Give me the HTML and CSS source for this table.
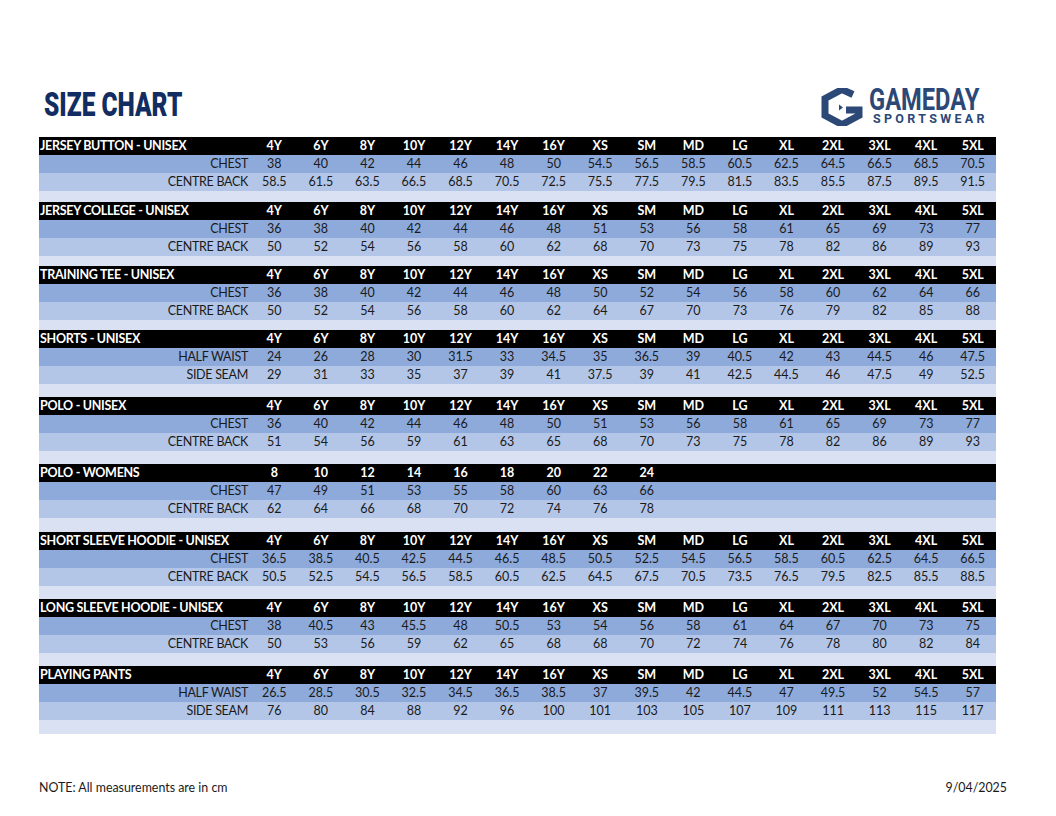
FILE: index.html
```html
<!DOCTYPE html>
<html>
<head>
<meta charset="utf-8">
<link rel="stylesheet" href="styles.css">
</head>
<body>
<div class="page">
  <header class="top">
    <h1 class="title"><span>SIZE CHART</span></h1>
    <div class="logo">
      <svg class="logo-mark" viewBox="0 0 42 38" width="42" height="38">
        <path d="M32,6.5 L21,1.5 L4,10.5 L4,27.5 L21,36.5 L38,27.5 L38,22 L25,22" fill="none" stroke="#2b4877" stroke-width="7" stroke-linejoin="miter"/>
        <polygon points="18,16.5 22,19.5 18,22.5" fill="#2b4877"/>
      </svg>
      <div class="logo-text">
        <div class="logo-name"><span>GAMEDAY</span></div>
        <div class="logo-sub">SPORTSWEAR</div>
      </div>
    </div>
  </header>

  <div class="chart">
    <section class="group">
      <div class="row head"><span class="label">JERSEY BUTTON - UNISEX</span><span>4Y</span><span>6Y</span><span>8Y</span><span>10Y</span><span>12Y</span><span>14Y</span><span>16Y</span><span>XS</span><span>SM</span><span>MD</span><span>LG</span><span>XL</span><span>2XL</span><span>3XL</span><span>4XL</span><span>5XL</span></div>
      <div class="row r1"><span class="label">CHEST</span><span>38</span><span>40</span><span>42</span><span>44</span><span>46</span><span>48</span><span>50</span><span>54.5</span><span>56.5</span><span>58.5</span><span>60.5</span><span>62.5</span><span>64.5</span><span>66.5</span><span>68.5</span><span>70.5</span></div>
      <div class="row r2"><span class="label">CENTRE BACK</span><span>58.5</span><span>61.5</span><span>63.5</span><span>66.5</span><span>68.5</span><span>70.5</span><span>72.5</span><span>75.5</span><span>77.5</span><span>79.5</span><span>81.5</span><span>83.5</span><span>85.5</span><span>87.5</span><span>89.5</span><span>91.5</span></div>
      <div class="spacer sp-a"></div>
    </section>

    <section class="group">
      <div class="row head"><span class="label">JERSEY COLLEGE - UNISEX</span><span>4Y</span><span>6Y</span><span>8Y</span><span>10Y</span><span>12Y</span><span>14Y</span><span>16Y</span><span>XS</span><span>SM</span><span>MD</span><span>LG</span><span>XL</span><span>2XL</span><span>3XL</span><span>4XL</span><span>5XL</span></div>
      <div class="row r1"><span class="label">CHEST</span><span>36</span><span>38</span><span>40</span><span>42</span><span>44</span><span>46</span><span>48</span><span>51</span><span>53</span><span>56</span><span>58</span><span>61</span><span>65</span><span>69</span><span>73</span><span>77</span></div>
      <div class="row r2"><span class="label">CENTRE BACK</span><span>50</span><span>52</span><span>54</span><span>56</span><span>58</span><span>60</span><span>62</span><span>68</span><span>70</span><span>73</span><span>75</span><span>78</span><span>82</span><span>86</span><span>89</span><span>93</span></div>
      <div class="spacer sp-b"></div>
    </section>

    <section class="group">
      <div class="row head"><span class="label">TRAINING TEE - UNISEX</span><span>4Y</span><span>6Y</span><span>8Y</span><span>10Y</span><span>12Y</span><span>14Y</span><span>16Y</span><span>XS</span><span>SM</span><span>MD</span><span>LG</span><span>XL</span><span>2XL</span><span>3XL</span><span>4XL</span><span>5XL</span></div>
      <div class="row r1"><span class="label">CHEST</span><span>36</span><span>38</span><span>40</span><span>42</span><span>44</span><span>46</span><span>48</span><span>50</span><span>52</span><span>54</span><span>56</span><span>58</span><span>60</span><span>62</span><span>64</span><span>66</span></div>
      <div class="row r2"><span class="label">CENTRE BACK</span><span>50</span><span>52</span><span>54</span><span>56</span><span>58</span><span>60</span><span>62</span><span>64</span><span>67</span><span>70</span><span>73</span><span>76</span><span>79</span><span>82</span><span>85</span><span>88</span></div>
      <div class="spacer sp-b"></div>
    </section>

    <section class="group">
      <div class="row head"><span class="label">SHORTS - UNISEX</span><span>4Y</span><span>6Y</span><span>8Y</span><span>10Y</span><span>12Y</span><span>14Y</span><span>16Y</span><span>XS</span><span>SM</span><span>MD</span><span>LG</span><span>XL</span><span>2XL</span><span>3XL</span><span>4XL</span><span>5XL</span></div>
      <div class="row r1"><span class="label">HALF WAIST</span><span>24</span><span>26</span><span>28</span><span>30</span><span>31.5</span><span>33</span><span>34.5</span><span>35</span><span>36.5</span><span>39</span><span>40.5</span><span>42</span><span>43</span><span>44.5</span><span>46</span><span>47.5</span></div>
      <div class="row r2"><span class="label">SIDE SEAM</span><span>29</span><span>31</span><span>33</span><span>35</span><span>37</span><span>39</span><span>41</span><span>37.5</span><span>39</span><span>41</span><span>42.5</span><span>44.5</span><span>46</span><span>47.5</span><span>49</span><span>52.5</span></div>
      <div class="spacer sp-c"></div>
    </section>

    <section class="group">
      <div class="row head"><span class="label">POLO - UNISEX</span><span>4Y</span><span>6Y</span><span>8Y</span><span>10Y</span><span>12Y</span><span>14Y</span><span>16Y</span><span>XS</span><span>SM</span><span>MD</span><span>LG</span><span>XL</span><span>2XL</span><span>3XL</span><span>4XL</span><span>5XL</span></div>
      <div class="row r1"><span class="label">CHEST</span><span>36</span><span>40</span><span>42</span><span>44</span><span>46</span><span>48</span><span>50</span><span>51</span><span>53</span><span>56</span><span>58</span><span>61</span><span>65</span><span>69</span><span>73</span><span>77</span></div>
      <div class="row r2"><span class="label">CENTRE BACK</span><span>51</span><span>54</span><span>56</span><span>59</span><span>61</span><span>63</span><span>65</span><span>68</span><span>70</span><span>73</span><span>75</span><span>78</span><span>82</span><span>86</span><span>89</span><span>93</span></div>
      <div class="spacer sp-c"></div>
    </section>

    <section class="group">
      <div class="row head"><span class="label">POLO - WOMENS</span><span>8</span><span>10</span><span>12</span><span>14</span><span>16</span><span>18</span><span>20</span><span>22</span><span>24</span></div>
      <div class="row r1"><span class="label">CHEST</span><span>47</span><span>49</span><span>51</span><span>53</span><span>55</span><span>58</span><span>60</span><span>63</span><span>66</span></div>
      <div class="row r2"><span class="label">CENTRE BACK</span><span>62</span><span>64</span><span>66</span><span>68</span><span>70</span><span>72</span><span>74</span><span>76</span><span>78</span></div>
      <div class="spacer sp-d"></div>
    </section>

    <section class="group">
      <div class="row head"><span class="label">SHORT SLEEVE HOODIE - UNISEX</span><span>4Y</span><span>6Y</span><span>8Y</span><span>10Y</span><span>12Y</span><span>14Y</span><span>16Y</span><span>XS</span><span>SM</span><span>MD</span><span>LG</span><span>XL</span><span>2XL</span><span>3XL</span><span>4XL</span><span>5XL</span></div>
      <div class="row r1"><span class="label">CHEST</span><span>36.5</span><span>38.5</span><span>40.5</span><span>42.5</span><span>44.5</span><span>46.5</span><span>48.5</span><span>50.5</span><span>52.5</span><span>54.5</span><span>56.5</span><span>58.5</span><span>60.5</span><span>62.5</span><span>64.5</span><span>66.5</span></div>
      <div class="row r2"><span class="label">CENTRE BACK</span><span>50.5</span><span>52.5</span><span>54.5</span><span>56.5</span><span>58.5</span><span>60.5</span><span>62.5</span><span>64.5</span><span>67.5</span><span>70.5</span><span>73.5</span><span>76.5</span><span>79.5</span><span>82.5</span><span>85.5</span><span>88.5</span></div>
      <div class="spacer sp-c"></div>
    </section>

    <section class="group">
      <div class="row head"><span class="label">LONG SLEEVE HOODIE - UNISEX</span><span>4Y</span><span>6Y</span><span>8Y</span><span>10Y</span><span>12Y</span><span>14Y</span><span>16Y</span><span>XS</span><span>SM</span><span>MD</span><span>LG</span><span>XL</span><span>2XL</span><span>3XL</span><span>4XL</span><span>5XL</span></div>
      <div class="row r1"><span class="label">CHEST</span><span>38</span><span>40.5</span><span>43</span><span>45.5</span><span>48</span><span>50.5</span><span>53</span><span>54</span><span>56</span><span>58</span><span>61</span><span>64</span><span>67</span><span>70</span><span>73</span><span>75</span></div>
      <div class="row r2"><span class="label">CENTRE BACK</span><span>50</span><span>53</span><span>56</span><span>59</span><span>62</span><span>65</span><span>68</span><span>68</span><span>70</span><span>72</span><span>74</span><span>76</span><span>78</span><span>80</span><span>82</span><span>84</span></div>
      <div class="spacer sp-c"></div>
    </section>

    <section class="group">
      <div class="row head"><span class="label">PLAYING PANTS</span><span>4Y</span><span>6Y</span><span>8Y</span><span>10Y</span><span>12Y</span><span>14Y</span><span>16Y</span><span>XS</span><span>SM</span><span>MD</span><span>LG</span><span>XL</span><span>2XL</span><span>3XL</span><span>4XL</span><span>5XL</span></div>
      <div class="row r1"><span class="label">HALF WAIST</span><span>26.5</span><span>28.5</span><span>30.5</span><span>32.5</span><span>34.5</span><span>36.5</span><span>38.5</span><span>37</span><span>39.5</span><span>42</span><span>44.5</span><span>47</span><span>49.5</span><span>52</span><span>54.5</span><span>57</span></div>
      <div class="row r2"><span class="label">SIDE SEAM</span><span>76</span><span>80</span><span>84</span><span>88</span><span>92</span><span>96</span><span>100</span><span>101</span><span>103</span><span>105</span><span>107</span><span>109</span><span>111</span><span>113</span><span>115</span><span>117</span></div>
      <div class="spacer sp-d"></div>
    </section>
  </div>

  <footer class="foot">
    <span>NOTE: All measurements are in cm</span>
    <span>9/04/2025</span>
  </footer>
</div>
</body>
</html>
```

FILE: styles.css
```css
html, body {
  margin: 0;
  padding: 0;
  background: #ffffff;
}

.page {
  width: 1056px;
  height: 816px;
  box-sizing: border-box;
  padding: 0 49px 0 39px;
  font-family: Lato, "Open Sans", sans-serif;
  color: #1a1a1a;
}

.top {
  width: 957px;
  height: 137px;
  display: flex;
  justify-content: space-between;
  align-items: flex-start;
}

.title {
  margin: 0;
  padding: 85px 0 0 5px;
  font-family: Roboto, "Liberation Sans", sans-serif;
  font-weight: 900;
  font-size: 34px;
  line-height: 38px;
  color: #112d62;
  white-space: nowrap;
}

.title span {
  display: inline-block;
  transform: scaleX(0.72);
  transform-origin: left center;
}

.logo {
  display: flex;
  align-items: flex-start;
  gap: 6px;
  padding: 87px 11px 0 0;
}

.logo-mark {
  display: block;
  margin-top: 1px;
}

.logo-text {
  display: flex;
  flex-direction: column;
  align-items: flex-start;
  width: 116px;
}

.logo-name {
  font-family: Roboto, "Liberation Sans", sans-serif;
  font-weight: 700;
  font-size: 32px;
  line-height: 25px;
  height: 25px;
  color: #2b4877;
  white-space: nowrap;
}

.logo-name span {
  display: inline-block;
  transform: scaleX(0.74);
  transform-origin: left center;
}

.logo-sub {
  font-family: Roboto, "Liberation Sans", sans-serif;
  font-weight: 700;
  font-size: 12.5px;
  line-height: 14px;
  letter-spacing: 3.3px;
  color: #2b4877;
  padding-left: 4px;
  white-space: nowrap;
}

.chart {
  width: 957px;
}

.row {
  display: grid;
  grid-template-columns: 212px repeat(16, 1fr);
  height: 18px;
  align-items: center;
  font-size: 12.5px;
  line-height: 18px;
}

.row span {
  text-align: center;
  white-space: nowrap;
}

.row .label {
  text-align: right;
  padding-right: 3px;
  letter-spacing: -0.3px;
}

.head {
  background: #000000;
  color: #ffffff;
  font-weight: 700;
}

.head .label {
  text-align: left;
  padding-left: 1px;
}

.r1 {
  background: #8eaadb;
}

.r2 {
  background: #b4c6e7;
}

.spacer {
  background: #d9e1f2;
}

.sp-a { height: 11px; }
.sp-b { height: 10px; }
.sp-c { height: 13px; }
.sp-d { height: 14px; }

.foot {
  display: flex;
  justify-content: space-between;
  width: 968px;
  margin-top: 46px;
  font-size: 12.4px;
  line-height: 16px;
  color: #1a1a1a;
}
```
